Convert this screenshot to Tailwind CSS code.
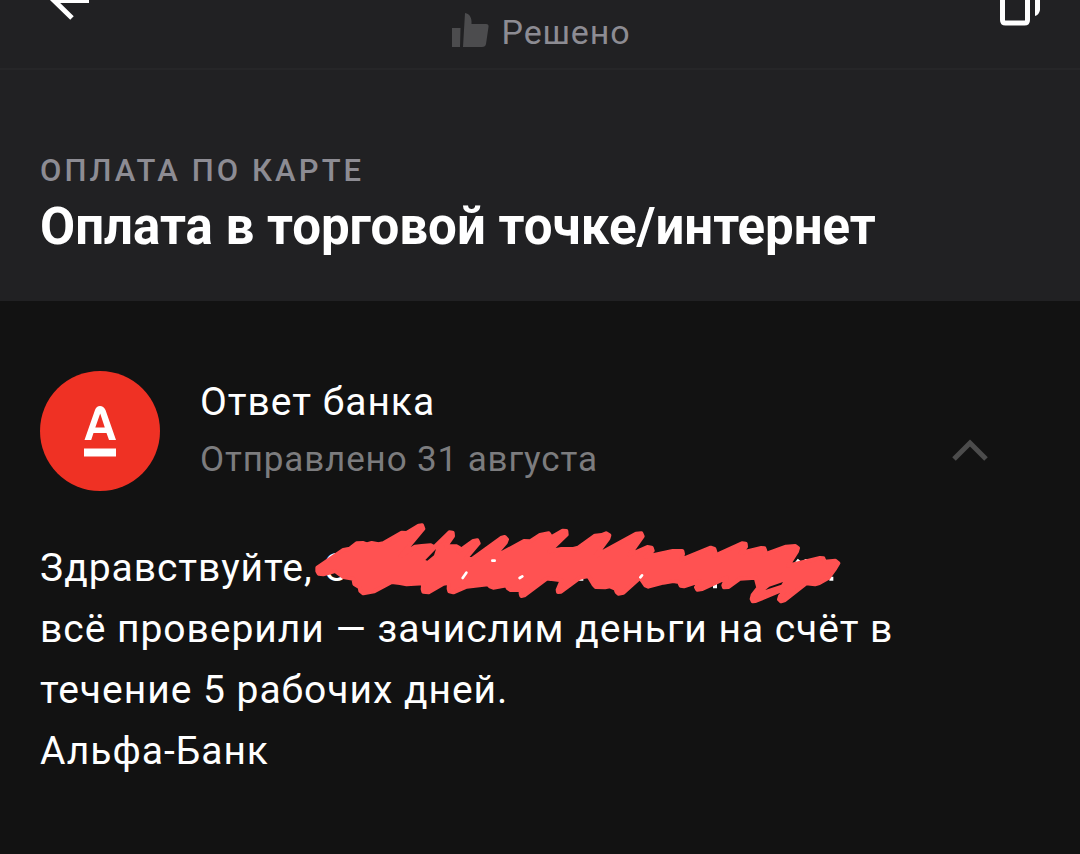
<!DOCTYPE html>
<html lang="ru">
<head>
  <meta charset="UTF-8" />
  <meta name="viewport" content="width=device-width, initial-scale=1.0" />
  <title>Оплата в торговой точке/интернет</title>
  <script src="https://cdn.jsdelivr.net/npm/@tailwindcss/browser@4"></script>
</head>
<body class="min-h-screen bg-[#121212] text-white font-[Roboto,sans-serif]">
  <header class="bg-[#212123]">
    <div class="flex items-start justify-between h-[70px] px-10 border-b-2 border-[#262628]">
      <button type="button" aria-label="Назад" class="w-14">
        <svg class="block w-14 h-6" viewBox="0 0 56 24" fill="none" stroke="#fff" stroke-width="5">
          <path d="M49 0.500H13M32 -19L12.500 -1L32 18" />
        </svg>
      </button>
      <div class="flex items-center gap-3 pt-3 text-[#8d8c93]">
        <svg class="w-10 h-10" viewBox="0 0 40 40" fill="#4c4c4e">
          <path d="M2 16H10.500L10 35H2zM15 1C20 2 22 6 21.500 12H36Q39 12 38.500 15L36 32Q35.500 35 32 35H13z" />
        </svg>
        <span class="text-[34px] leading-10 tracking-wide">Решено</span>
      </div>
      <button type="button" aria-label="Копировать" class="w-14">
        <svg class="block ml-auto w-10 h-7" viewBox="0 0 40 28" fill="none" stroke="#fff" stroke-width="5">
          <path d="M2.500 -5V20Q2.500 23 5.500 23H24.500Q27.500 23 27.500 20V-5" />
          <path d="M35 0H40V10Q39 15 35 16z" fill="#fff" stroke="none" />
        </svg>
      </button>
    </div>
    <div class="px-10 pt-[81px] pb-[42px]">
      <p class="text-[31px] leading-10 font-medium tracking-widest uppercase text-[#8d8c93]">Оплата по карте</p>
      <h1 class="mt-1 text-[51px] leading-16 font-bold">Оплата в торговой точке/интернет</h1>
    </div>
  </header>

  <main class="px-10 pt-[70px] pb-16">
    <div class="flex items-center">
      <svg class="w-[120px] h-[120px] shrink-0" viewBox="0 0 120 120" fill="#fff" role="img" aria-label="Альфа-Банк">
        <circle cx="60" cy="60" r="60" fill="#ef3124" />
        <path fill-rule="evenodd" d="M44.500 69L55 39Q56.500 35 60 35Q63.500 35 65.500 39L76 69H69L66.500 62H53.500L51.200 69zM55.300 56.500H64.800L60.200 42.500z" />
        <path d="M44 77.500H76V85.500H44z" />
      </svg>
      <div class="ml-10 grow">
        <h2 class="text-[39px] leading-[58px] tracking-wide">Ответ банка</h2>
        <p class="text-[35px] leading-[58px] tracking-wide text-[#7c7c7e]">Отправлено 31 августа</p>
      </div>
      <button type="button" aria-label="Свернуть" class="mr-[50px] mt-9">
        <svg class="block w-10 h-8" viewBox="0 0 40 32" fill="none" stroke="#4c4c4c" stroke-width="5">
          <path d="M4 26L20 10L36 26" />
        </svg>
      </button>
    </div>

    <div class="relative mt-[47px] text-[39px] leading-[61px] tracking-wide">
      <p>Здравствуйте, С<br />всё проверили — зачислим деньги на счёт в<br />течение 5 рабочих дней.<br />Альфа-Банк</p>
      <svg class="absolute left-[260px] top-[-28px] w-[560px] h-[100px]" viewBox="0 0 1680 300" fill="none" stroke-linecap="round" stroke-linejoin="round" aria-hidden="true">
        <!-- bits of letters at the edge of the marker -->
        <path stroke="#fff" stroke-width="12" stroke-linecap="butt" d="M745 203Q765 212 782 194M836 206H850M1245 205V235M1325 203Q1345 208 1360 192M1138 158L1152 150M1482 170L1498 150M1514 153H1528M1588 206H1600" />
        <!-- marker body -->
        <path fill="#ff5252" stroke="#ff5252" stroke-width="12" d="M52 173L130 120L150 116L170 100L190 99L200 103L215 99L235 103L250 100L305 68L320 69L356 47L366 46L370 56L302 138L345 110L365 108L392 106L402 112L448 67L458 68L459 78L438 108L470 109L478 114L476 124L520 93L532 91L536 100L498 145L515 148L603 84L614 81L621 88L617 98L576 145L672 93L690 94L720 75L746 70L754 82L788 62L799 63L800 74L748 124L784 117L820 117L835 113L885 77L905 75L918 70L928 76L925 86L886 138L1008 71L1024 70L1028 79L988 135L1042 111L1055 113L1058 122L1038 140L1118 123L1147 123L1149 132L1144 149L1232 113L1243 117L1246 126L1242 138L1326 100L1337 101L1338 110L1322 129L1384 114L1393 115L1396 122L1392 134L1458 110L1486 108L1494 114L1491 124L1464 167L1560 144L1570 145L1574 155L1606 152L1615 160L1606 175L1586 203L1558 219L1545 223L1518 220L1455 270L1443 274L1437 268L1440 258L1455 241L1450 238L1367 273L1358 274L1355 267L1358 255L1375 233L1367 203L1320 206L1286 231L1272 232L1270 226L1280 203L1207 237L1192 239L1188 232L1200 213L1152 229L1142 227L1137 216L1120 213L1090 218L1045 230L1036 226L1020 203L970 248L955 251L950 246L946 236L930 229L915 232L887 231L880 223L865 198L840 203L783 245L774 246L773 239L785 211L750 206L740 206L673 256L664 258L662 251L662 240L632 240L623 234L620 226L580 233L570 229L564 223L500 230L460 247L448 244L446 236L447 218L430 221L386 247L370 245L368 237L370 220L320 223L300 219L275 216L223 244L190 250L181 243L179 232L163 222L160 206L130 201L105 183L70 193L56 191L52 183z" />
        <!-- gaps between the marker strokes -->
        <path fill="#121212" d="M376 150L408 117L402 136L382 152zM1396 240L1408 230L1449 216L1444 224z" />
        <path stroke="#fff" stroke-width="8" d="M488 204L499 188M577 152H584M659 204L667 199M1021 202L1026 196" />
      </svg>
    </div>
  </main>
</body>
</html>
